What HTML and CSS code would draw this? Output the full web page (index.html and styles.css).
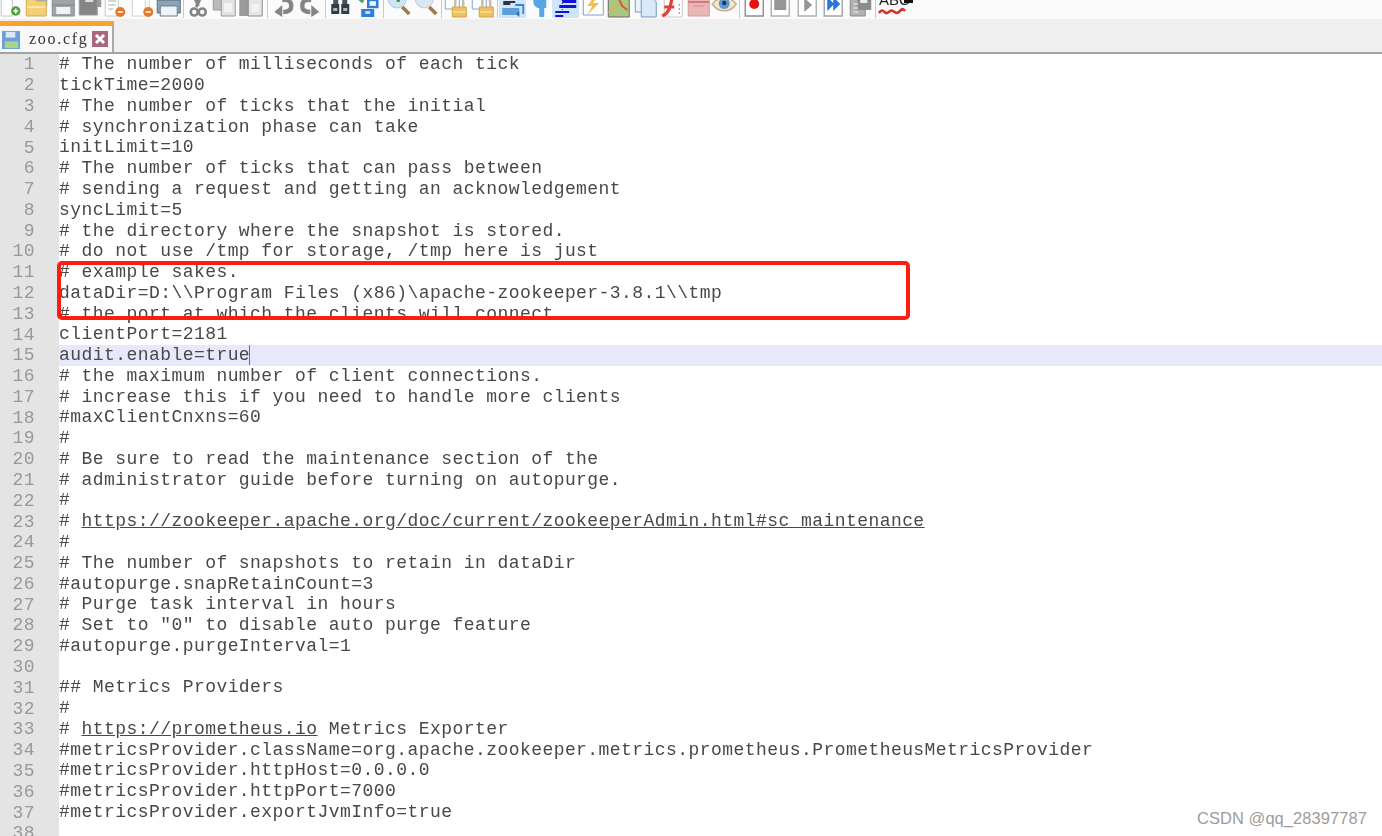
FILE: index.html
```html
<!DOCTYPE html>
<html lang="en">
<head>
<meta charset="utf-8">
<title>zoo.cfg</title>
<link rel="stylesheet" href="styles.css">
</head>
<body>
<div class="app">
  <div class="toolbar">
    <svg class="ic first" viewBox="0 0 26 26"><path d="M5 0h11v24H5z" fill="#fff" stroke="#c4c4c4"/><circle cx="19.5" cy="19" r="4.7" fill="#4f9d3f"/><path d="M19.5 16.500v5M17 19h5" stroke="#fff" stroke-width="1.6"/></svg>
    <svg class="ic" viewBox="0 0 26 26"><path d="M12 0h12v14H12z" fill="#7fb0dc"/><path d="M3 6h8l2 3h10v15H3z" fill="#f6cf73" stroke="#d9a94e"/><path d="M4 14h18v2H4z" fill="#fbe7a8"/></svg>
    <svg class="ic" viewBox="0 0 26 26"><path d="M3 0h22v24H3z" fill="#a0a4a6" stroke="#84888a"/><path d="M7 15h14v7H7z" fill="#f2f2f2"/><path d="M3 12h22v2H3z" fill="#8f9395"/></svg>
    <svg class="ic" viewBox="0 0 26 26"><path d="M9 0h16v15H9z" fill="#9a9a9a"/><path d="M3 3h18v20H3z" fill="#858585" stroke="#999"/><path d="M9 5h8v5H9z" fill="#ddd"/></svg>
    <svg class="ic" viewBox="0 0 26 26"><path d="M3 0h13v24H3z" fill="#fff" stroke="#c8c8c8"/><path d="M6 5h8M6 9h8M6 13h7M6 17h5" stroke="#aaa"/><circle cx="18" cy="20" r="5" fill="#e8772a"/><path d="M15.500 20h5" stroke="#fff" stroke-width="1.6"/></svg>
    <svg class="ic" viewBox="0 0 26 26"><path d="M8 0h12v18H8z" fill="#f7f7f7" stroke="#d6d6d6"/><path d="M3 4h13v20H3z" fill="#fff" stroke="#d0d0d0"/><circle cx="19" cy="20" r="5" fill="#e8772a"/><path d="M16.500 20h5" stroke="#fff" stroke-width="1.6"/></svg>
    <svg class="ic" viewBox="0 0 26 26"><path d="M7 0h13v10H7z" fill="#f4f4f4" stroke="#999"/><path d="M2 8h23v13H2z" fill="#8aa3b8" stroke="#5d6b76"/><path d="M5 14h17v10H5z" fill="#eef3f7" stroke="#6d7c88"/></svg>
    <i class="sep"></i>
    <svg class="ic" viewBox="0 0 26 26"><path d="M18 0l-7 15M8 2l5 12" stroke="#858585" stroke-width="3" fill="none"/><circle cx="9" cy="20" r="3.500" fill="none" stroke="#858585" stroke-width="2.6"/><circle cx="17" cy="20" r="3.500" fill="none" stroke="#858585" stroke-width="2.6"/></svg>
    <svg class="ic" viewBox="0 0 26 26"><path d="M2 0h14v18H2z" fill="#bbb" stroke="#999"/><path d="M10 5h14v19H10z" fill="#e2e2e2" stroke="#999"/><path d="M13 11h8v9h-8z" fill="#f4f4f4"/></svg>
    <svg class="ic" viewBox="0 0 26 26"><path d="M1 0h17v24H1z" fill="#9b9b9b"/><path d="M10 6h14v18H10z" fill="#e4e4e4" stroke="#8c8c8c"/><path d="M13 12h8v8h-8z" fill="#f2f2f2"/></svg>
    <i class="sep sep-l"></i>
    <svg class="ic" viewBox="0 0 26 26"><path d="M12 8c7-1 9 2 9 6 0 4-3 6-8 6" stroke="#858585" stroke-width="4.4" fill="none"/><path d="M12 13l-8 7 8 5z" fill="#858585"/></svg>
    <svg class="ic" viewBox="0 0 26 26"><path d="M14 8c-7-1-9 2-9 6 0 4 3 6 8 6" stroke="#858585" stroke-width="4.4" fill="none"/><path d="M14 13l8 7-8 5z" fill="#858585"/></svg>
    <i class="sep sep-m"></i>
    <svg class="ic" viewBox="0 0 26 26"><path d="M4 12h8v10H4zM14 12h8v10h-8z" fill="#333c44"/><path d="M6 4h5v8H6zM15 4h5v8h-5z" fill="#4a545d"/><path d="M6 16h4v3H6zM16 16h4v3h-4z" fill="#aeb9c2"/></svg>
    <svg class="ic" viewBox="0 0 26 26"><path d="M3 5l6 5" stroke="#44a05a" stroke-width="3"/><path d="M14 8h9v7h-9z" fill="none" stroke="#2d7fd6" stroke-width="2.6"/><path d="M7 17h13v8H7z" fill="#2d7fd6"/><path d="M11 19h5v3h-5z" fill="#bcdcf8"/></svg>
    <i class="sep sep-l"></i>
    <svg class="ic" viewBox="0 0 26 26"><circle cx="11" cy="7" r="9" fill="#cfe4f4" stroke="#a9c6db"/><path d="M8 6h8M12 2v8" stroke="#3e9a3a" stroke-width="3.2"/><path d="M16 15l7 7" stroke="#a07a4a" stroke-width="3.6"/></svg>
    <svg class="ic" viewBox="0 0 26 26"><circle cx="11" cy="7" r="9" fill="#d9e7f2" stroke="#b5cbdb"/><path d="M8 6h10" stroke="#e0464a" stroke-width="3.2"/><path d="M16 15l7 7" stroke="#a07a4a" stroke-width="3.6"/></svg>
    <i class="sep sep-m"></i>
    <svg class="ic" viewBox="0 0 26 26"><path d="M2 4h14v13H2z" fill="#fff" stroke="#7fa5d0"/><path d="M9 15h14v10H9z" fill="#f2bf5e" stroke="#d6a247"/><path d="M12 15v-5a4 4 0 0 1 8 0v5" fill="none" stroke="#c0bcae" stroke-width="2.4"/><path d="M10 20h12" stroke="#f9dc93" stroke-width="2"/></svg>
    <svg class="ic" viewBox="0 0 26 26"><path d="M2 4h14v13H2z" fill="#fff" stroke="#7fa5d0"/><path d="M9 15h14v10H9z" fill="#f2bf5e" stroke="#d6a247"/><path d="M12 15v-5a4 4 0 0 1 8 0v5" fill="none" stroke="#c0bcae" stroke-width="2.4"/><path d="M10 20h12" stroke="#f9dc93" stroke-width="2"/></svg>
    <i class="sep"></i>
    <svg class="ic hl" viewBox="0 0 26 26"><path d="M4 10h12M4 12h7" stroke="#333" stroke-width="1.8"/><path d="M16 13h8v9" fill="none" stroke="#2f86d6" stroke-width="1.8"/><path d="M3 16h17v7H3z" fill="#5f9fd8"/><path d="M20 19l-3 3 3 3z" fill="#1f6ab2"/></svg>
    <svg class="ic" viewBox="0 0 26 26"><path d="M7 8h13v8h-2v9h-5v-9c-3 0-6-2-6-8z" fill="#5aa6e4"/></svg>
    <svg class="ic hl" viewBox="0 0 26 26"><path d="M10 8h14v3H10zM7 13h17v3H7zM3 19h14v2H3zM3 23h8v2H3z" fill="#1212e0"/><path d="M10 8v18" stroke="#1212e0" stroke-dasharray="1 2"/></svg>
    <svg class="ic" viewBox="0 0 26 26"><path d="M4 6h20v17H4z" fill="#fff" stroke="#7f9fc4"/><path d="M16 3l-8 11h5l-5 9 12-12h-6l5-8z" fill="#f2c04f"/></svg>
    <svg class="ic" viewBox="0 0 26 26"><path d="M3 0h21v25H3z" fill="#a9c77e" stroke="#666"/><path d="M10 0l7 14 5 4" stroke="#d85a3a" stroke-width="2" fill="none"/><path d="M3 20l9-6" stroke="#e0b050" stroke-width="2"/></svg>
    <svg class="ic" viewBox="0 0 26 26"><path d="M3 2h14v18H3z" fill="#eaf2fb" stroke="#6d9ad0"/><path d="M9 7h12l3 3v15H9z" fill="#dbe8f8" stroke="#6d9ad0"/></svg>
    <svg class="ic" viewBox="0 0 26 26"><path d="M6 2h18v23H6z" fill="#fff" stroke="#c8c8c8"/><path d="M19 3c-7 0-5 8-8 14s-5 6-7 7M6 15h10" stroke="#e2403c" stroke-width="3.2" fill="none"/><path d="M21 12v11" stroke="#888" stroke-dasharray="2 2"/></svg>
    <svg class="ic" viewBox="0 0 26 26"><path d="M3 2h21v22H3z" fill="#eab5b5" stroke="#d59a9a"/><path d="M3 9h21v2H3z" fill="#d47a7a"/><path d="M8 14h11" stroke="#d98888"/></svg>
    <svg class="ic" viewBox="0 0 26 26"><path d="M1 12c6-8 18-8 24 0-6 9-18 9-24 0z" fill="#f4e7cf" stroke="#cdb184" stroke-width="1.6"/><circle cx="13" cy="11.500" r="5.500" fill="#5c9ad0"/><circle cx="13" cy="11" r="2.200" fill="#23364d"/></svg>
    <i class="sep"></i>
    <svg class="ic" viewBox="0 0 26 26"><path d="M4 3h18v21H4z" fill="#fff" stroke="#8d8d8d" stroke-width="1.4"/><circle cx="13" cy="12" r="5" fill="#e60f14"/></svg>
    <svg class="ic" viewBox="0 0 26 26"><path d="M4 3h18v21H4z" fill="#fff" stroke="#b0b0b0" stroke-width="1.4"/><path d="M7 6h12v12H7z" fill="#969696"/></svg>
    <svg class="ic" viewBox="0 0 26 26"><path d="M4 3h18v21H4z" fill="#fff" stroke="#b0b0b0" stroke-width="1.4"/><path d="M10 6l8 7-8 7z" fill="#969696"/></svg>
    <svg class="ic" viewBox="0 0 26 26"><path d="M4 3h18v21H4z" fill="#fff" stroke="#9aa6b4" stroke-width="1.4"/><path d="M7 5l7 7-7 7zM13 5l7 7-7 7z" fill="#2b74d8"/></svg>
    <svg class="ic" viewBox="0 0 26 26"><path d="M3 4h15v20H3z" fill="#b2b2b2" stroke="#8b8b8b"/><path d="M10 4h14v14H10z" fill="#8c8c8c"/><path d="M13 7h7v4h-7z" fill="#eee"/><path d="M6 12h5M6 16h5M6 20h5" stroke="#efefef"/></svg>
    <i class="sep sep-m"></i>
    <svg class="ic abc" viewBox="0 0 36 26"><text class="abc-t" x="2" y="13">ABC</text><path d="M2 21c3-5 5-1 7 0s4-4 7-2 4 3 7 0 3-2 5 0" fill="none" stroke="#dc2f2a" stroke-width="2.6"/><path d="M27 7h10v4H27z" fill="#111"/></svg>
  </div>

  <div class="tabbar">
    <div class="tab">
      <svg class="tab-save" viewBox="0 0 20 20"><path d="M0 1h19v19H0z" fill="#6e9fd8"/><path d="M4 2h10v6H4z" fill="#dbe8f7"/><path d="M3 12h14v7H3z" fill="#a9d58a"/></svg>
      <span class="tab-name">zoo.cfg</span>
      <svg class="tab-close" viewBox="0 0 16 16"><path d="M0 0h16v16H0z" fill="#a9667f"/><path d="M4 4l8 8M12 4l-8 8" stroke="#fff" stroke-width="3"/></svg>
    </div>
  </div>

  <div class="editor">
    <div class="gutter">
      <div>1</div><div>2</div><div>3</div><div>4</div><div>5</div><div>6</div><div>7</div><div>8</div><div>9</div><div>10</div>
      <div>11</div><div>12</div><div>13</div><div>14</div><div>15</div><div>16</div><div>17</div><div>18</div><div>19</div><div>20</div>
      <div>21</div><div>22</div><div>23</div><div>24</div><div>25</div><div>26</div><div>27</div><div>28</div><div>29</div><div>30</div>
      <div>31</div><div>32</div><div>33</div><div>34</div><div>35</div><div>36</div><div>37</div><div>38</div>
    </div>
    <div class="code">
      <div class="ln"># The number of milliseconds of each tick</div>
      <div class="ln">tickTime=2000</div>
      <div class="ln"># The number of ticks that the initial</div>
      <div class="ln"># synchronization phase can take</div>
      <div class="ln">initLimit=10</div>
      <div class="ln"># The number of ticks that can pass between</div>
      <div class="ln"># sending a request and getting an acknowledgement</div>
      <div class="ln">syncLimit=5</div>
      <div class="ln"># the directory where the snapshot is stored.</div>
      <div class="ln"># do not use /tmp for storage, /tmp here is just</div>
      <div class="ln"># example sakes.</div>
      <div class="ln">dataDir=D:\\Program Files (x86)\apache-zookeeper-3.8.1\\tmp</div>
      <div class="ln"># the port at which the clients will connect</div>
      <div class="ln">clientPort=2181</div>
      <div class="ln current">audit.enable=true<i class="caret"></i></div>
      <div class="ln"># the maximum number of client connections.</div>
      <div class="ln"># increase this if you need to handle more clients</div>
      <div class="ln">#maxClientCnxns=60</div>
      <div class="ln">#</div>
      <div class="ln"># Be sure to read the maintenance section of the</div>
      <div class="ln"># administrator guide before turning on autopurge.</div>
      <div class="ln">#</div>
      <div class="ln"># <u>https://zookeeper.apache.org/doc/current/zookeeperAdmin.html#sc_maintenance</u></div>
      <div class="ln">#</div>
      <div class="ln"># The number of snapshots to retain in dataDir</div>
      <div class="ln">#autopurge.snapRetainCount=3</div>
      <div class="ln"># Purge task interval in hours</div>
      <div class="ln"># Set to "0" to disable auto purge feature</div>
      <div class="ln">#autopurge.purgeInterval=1</div>
      <div class="ln"></div>
      <div class="ln">## Metrics Providers</div>
      <div class="ln">#</div>
      <div class="ln"># <u>https://prometheus.io</u> Metrics Exporter</div>
      <div class="ln">#metricsProvider.className=org.apache.zookeeper.metrics.prometheus.PrometheusMetricsProvider</div>
      <div class="ln">#metricsProvider.httpHost=0.0.0.0</div>
      <div class="ln">#metricsProvider.httpPort=7000</div>
      <div class="ln">#metricsProvider.exportJvmInfo=true</div>
      <div class="ln"></div>
    </div>
  </div>

  <div class="redbox"></div>
  <div class="watermark">CSDN @qq_28397787</div>
</div>
</body>
</html>
```
FILE: styles.css
```css
html, body {
  margin: 0;
  padding: 0;
  height: 100%;
  overflow: hidden;
  background: #fff;
}

.app {
  position: relative;
  height: 836px;
  overflow: hidden;
  display: flex;
  flex-direction: column;
}

.toolbar {
  height: 19px;
  flex: none;
  display: flex;
  align-items: flex-end;
  background: #fbfbfb;
  overflow: hidden;
  padding-bottom: 1px;
  box-sizing: border-box;
}

.ic {
  flex: none;
  width: 26.5px;
  height: 26px;
  filter: blur(0.5px);
}

.first { margin-left: -3.75px; }

.hl { background: #cfe5fb; }

.abc { width: 36px; }

.abc-t {
  font: 15px "Liberation Sans", sans-serif;
  fill: #222;
}

.sep {
  flex: none;
  width: 1px;
  height: 18px;
  margin: 0 1px;
  background: #c8c8c8;
}

.sep-m { margin: 0 1.5px; }
.sep-l { margin: 0 2.5px; }

.tabbar {
  height: 35px;
  flex: none;
  background: #efefef;
  border-bottom: 2px solid #a3a3a3;
  box-sizing: border-box;
  padding-top: 2px;
  display: flex;
}

.tab {
  width: 114px;
  box-sizing: border-box;
  background: #f8f8f8;
  border-top: 5px solid #f9a32f;
  border-right: 2px solid #a9a9a9;
  padding-left: 2px;
  display: flex;
  align-items: center;
}

.tab-save { width: 19px; height: 19px; flex: none; filter: blur(0.4px); }

.tab-name {
  margin-left: 8px;
  width: 63px;
  flex: none;
  font: 16px "Liberation Serif", serif;
  letter-spacing: 1.7px;
  color: #333;
  filter: blur(0.3px);
}

.tab-close { width: 16px; height: 16px; flex: none; filter: blur(0.3px); }

.editor {
  flex: 1;
  display: flex;
  min-height: 0;
  font: 18px/20.78px "Liberation Mono", monospace;
  letter-spacing: 0.44px;
}

.gutter {
  width: 59px;
  flex: none;
  box-sizing: border-box;
  padding: 0.4px 24px 0 0;
  background: #e4e4e4;
  color: #989898;
  text-align: right;
  filter: blur(0.3px);
}

.code {
  flex: 1;
  padding-top: 0.4px;
  color: #484848;
  filter: blur(0.3px);
}

.ln {
  height: 20.78px;
  white-space: pre;
}

.current { background: #e8e8fb; }

.caret {
  display: inline-block;
  width: 1px;
  height: 20px;
  margin-left: -1px;
  vertical-align: top;
  background: #7a4fe0;
}

.redbox {
  position: absolute;
  left: 57px;
  top: 261px;
  width: 853px;
  height: 59px;
  box-sizing: border-box;
  border: 4px solid #ff1c10;
  border-radius: 5px;
}

.watermark {
  position: absolute;
  left: 1197px;
  top: 808px;
  font: 16.5px/20px "Liberation Sans", sans-serif;
  color: #9c9c9c;
  letter-spacing: 0.05px;
}
```
